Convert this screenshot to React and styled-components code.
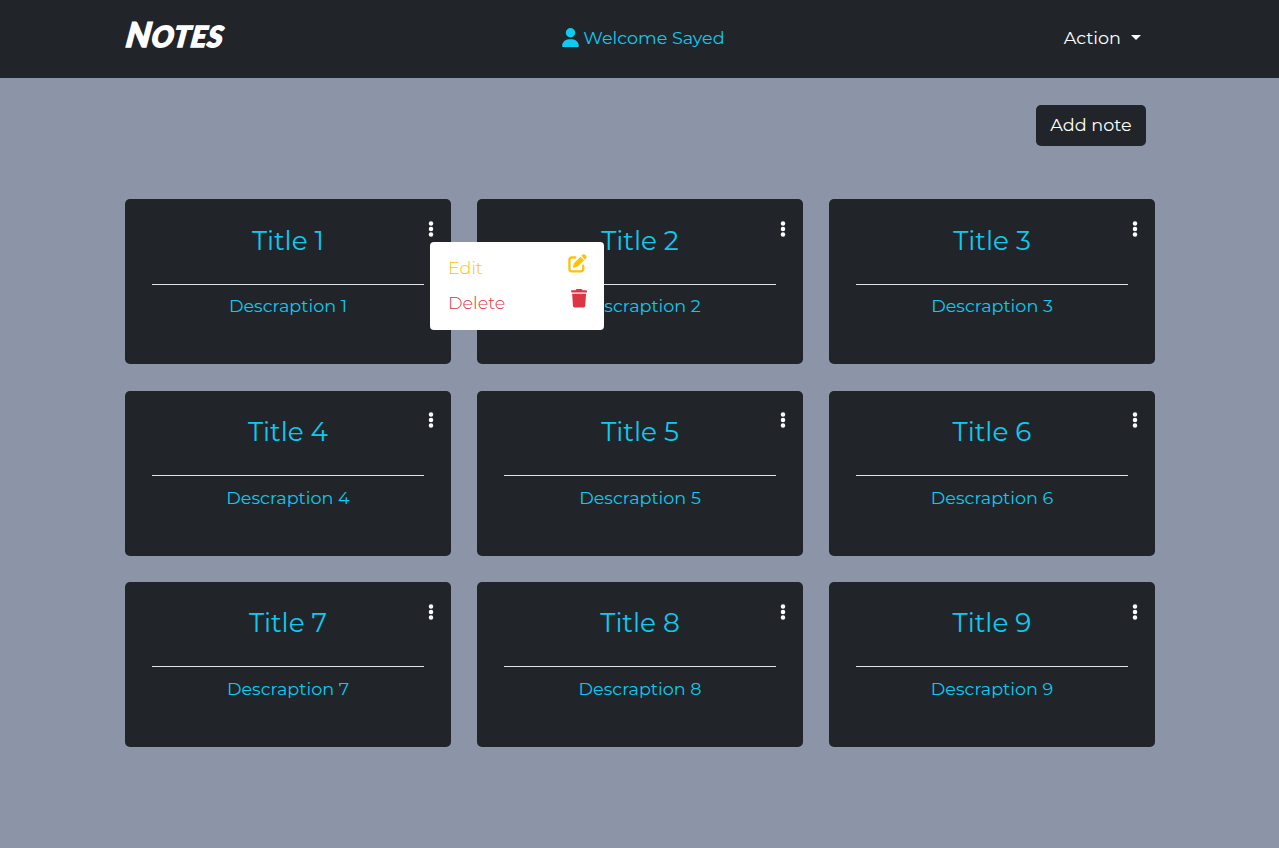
import React from "react";
import styled, { createGlobalStyle } from "styled-components";
import { FaUser, FaPenToSquare, FaTrash } from "react-icons/fa6";

const GlobalStyle = createGlobalStyle`
  *, *::before, *::after { box-sizing: border-box; }
  body {
    margin: 0;
    min-height: 100vh;
    background: #8c94a7;
    font-family: Montserrat, Inter, "Liberation Sans", sans-serif;
    font-size: 17.6px;
    line-height: 26.4px;
    color: #fff;
  }
`;

const Navbar = styled.header`
  height: 78px;
  padding: 0 138px 0 125px;
  background: #212529;
  display: flex;
  justify-content: space-between;
  align-items: flex-start;
`;

const Brand = styled.div`
  width: 360px;
  padding-top: 14px;
  font-family: "Permanent Marker", Lato, sans-serif;
  font-size: 29px;
  line-height: 40px;
  font-weight: 900;
  font-style: italic;
  text-transform: uppercase;
  letter-spacing: 1px;
  -webkit-text-stroke: 1.5px #fff;
  transform: skewX(-8deg);
  transform-origin: 0 47px;
  &::first-letter { font-size: 34px; }
`;

const Welcome = styled.div`
  display: flex;
  align-items: center;
  gap: 4px;
  padding-top: 24.6px;
  color: #0dcaf0;
  white-space: nowrap;
  svg { width: 17px; height: 19px; }
`;

const ActionToggle = styled.button`
  display: flex;
  align-items: center;
  justify-content: flex-end;
  gap: 10px;
  width: 339px;
  margin-top: 24.6px;
  padding: 0;
  border: 0;
  background: none;
  color: #fff;
  font: inherit;
  &::after {
    content: "";
    border: 5.5px solid transparent;
    border-top-color: #fff;
    border-bottom: 0;
  }
`;

const Main = styled.main`
  width: 1030px;
  margin: 0 0 0 125px;
  padding-top: 27px;
`;

const Toolbar = styled.div`
  display: flex;
  justify-content: flex-end;
  padding-right: 9px;
  margin-bottom: 53.4px;
`;

const AddButton = styled.button`
  width: 110px;
  height: 41px;
  padding: 0 0 1px;
  border: 0;
  border-radius: 5px;
  background: #212529;
  color: #fff;
  font: inherit;
  white-space: nowrap;
`;

const NotesGrid = styled.div`
  display: grid;
  grid-template-columns: repeat(3, 326px);
  grid-auto-rows: 165px;
  gap: 26.2px 26px;
`;

const Card = styled.article`
  position: relative;
  padding: 25.4px 27px;
  border-radius: 5px;
  background: #212529;
  color: #0dcaf0;
  text-align: center;
`;

const Title = styled.h2`
  height: 60px;
  margin: 0;
  border-bottom: 1px solid #e1e4e7;
  font-size: 26.4px;
  line-height: 31.7px;
  font-weight: 400;
`;

const Description = styled.p`
  margin: 8.65px 0 0;
`;

const MoreButton = styled.button`
  position: absolute;
  top: 20.8px;
  right: 17px;
  display: flex;
  padding: 0;
  border: 0;
  background: none;
  color: #fff;
`;

const Menu = styled.div`
  position: absolute;
  z-index: 2;
  top: 43px;
  left: 305px;
  width: 174px;
  height: 88px;
  padding: 8px 17px 0 18px;
  border-radius: 4px;
  background: #fff;
  text-align: left;
`;

const MenuItem = styled.div`
  display: flex;
  justify-content: space-between;
  height: 35px;
  line-height: 36px;
  color: ${(p) => p.$color};
  font-weight: 300;
  svg { width: ${(p) => p.$iconWidth}px; height: 18.5px; margin-top: 4px; }
`;

const DotsIcon = () => (
  <svg width="6" height="18" viewBox="0 0 6 18" fill="currentColor">
    <circle cx="3" cy="3.4" r="2.25" />
    <circle cx="3" cy="9" r="2.25" />
    <circle cx="3" cy="14.6" r="2.25" />
  </svg>
);

const notes = [1, 2, 3, 4, 5, 6, 7, 8, 9];

export default function App() {
  return (
    <>
      <GlobalStyle />
      <Navbar>
        <Brand>Notes</Brand>
        <Welcome><FaUser />Welcome Sayed</Welcome>
        <ActionToggle>Action</ActionToggle>
      </Navbar>
      <Main>
        <Toolbar><AddButton>Add note</AddButton></Toolbar>
        <NotesGrid>
          {notes.map((n) => (
            <Card key={n}>
              <Title>Title {n}</Title>
              <Description>Descraption {n}</Description>
              <MoreButton aria-label="Note options"><DotsIcon /></MoreButton>
              {n === 1 && (
                <Menu>
                  <MenuItem $color="#ffc107" $iconWidth={19}>Edit<FaPenToSquare /></MenuItem>
                  <MenuItem $color="#dc3545" $iconWidth={16.2}>Delete<FaTrash /></MenuItem>
                </Menu>
              )}
            </Card>
          ))}
        </NotesGrid>
      </Main>
    </>
  );
}
